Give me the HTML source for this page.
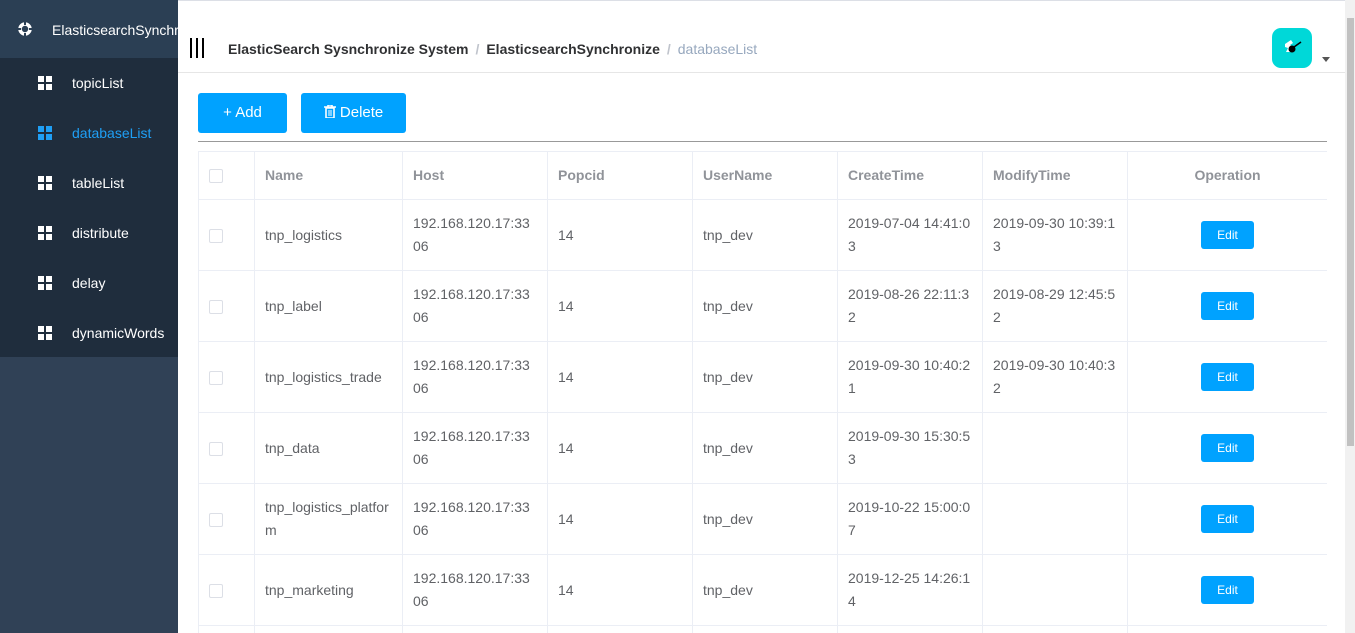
<!DOCTYPE html>
<html><head><meta charset="utf-8"><style>
*{box-sizing:border-box;margin:0;padding:0}
html,body{width:1355px;height:633px;overflow:hidden}
body{font-family:"Liberation Sans",Arial,sans-serif;background:#fff;position:relative}
.sb{position:absolute;left:0;top:0;width:178px;height:633px;background:#304156}
.logo{position:absolute;left:0;top:0;width:178px;height:58px;background:#2b3f54;color:#fff;font-size:14px;overflow:hidden;white-space:nowrap}
.logo .t{position:absolute;left:52px;top:22px}
.menu{position:absolute;top:58px;left:0;width:178px;height:299px;background:#1f2d3d}
.mi{height:50px;position:relative;color:#fff;font-size:14px}
.mi .ic{position:absolute;left:38px;top:18px;width:14px;height:14px}
.mi .ic i{position:absolute;width:6px;height:6px;background:currentColor}
.mi span{position:absolute;left:72px;top:17px}
.mi.act{color:#1f9ff5}
.top{position:absolute;left:178px;top:0;right:10px;height:73px;border-top:1px solid #dcdfe6;border-bottom:1px solid #e6e6e6}
.bc{position:absolute;left:50px;top:40px;font-size:14px;font-weight:bold;color:#303133;white-space:nowrap}
.bc .s{color:#c0c4cc;margin:0 7px;font-weight:bold}
.bc .l{color:#97a8be;font-weight:normal}
.ham{position:absolute;left:12px;top:37px}
.ham i{position:absolute;top:0;width:2px;height:20px;background:#000}
.av{position:absolute;left:1272px;top:28px;width:40px;height:40px;border-radius:9px;background:#00d8d8}
.car{position:absolute;left:1322px;top:57px;border:4px solid transparent;border-top:5px solid #555}
.btn{position:absolute;top:93px;height:40px;background:#00a2ff;color:#fff;font-size:15px;border-radius:3px;line-height:40px;text-align:center}
.line{position:absolute;left:198px;top:141px;width:1129px;height:1px;background:#999}
.tw{position:absolute;left:198px;top:151px;width:1129px;height:482px;overflow:hidden}
table{border-collapse:collapse;width:1129px;table-layout:fixed;font-size:14px;color:#606266}
td,th{border:1px solid #ebeef5;padding:0 10px;text-align:left;line-height:23px;vertical-align:middle;word-break:break-all}
th{height:48px;color:#909399;font-weight:bold}
td{height:71px}
.cb{display:inline-block;width:14px;height:14px;border:1px solid #dcdfe6;border-radius:2px;background:#fff;vertical-align:middle}
.e{display:inline-block;width:53px;height:28px;background:#00a2ff;color:#fff;font-size:12px;line-height:28px;text-align:center;border-radius:3px}
.sc{position:absolute;right:0;top:0;width:10px;height:633px;background:#f1f1f1}
.sc i{position:absolute;left:2px;top:18px;width:7px;height:428px;background:#c1c1c1}
</style></head><body>
<div class="sb">
<div class="logo"><svg style="position:absolute;left:18px;top:22px" width="14" height="14" viewBox="0 0 14 14"><circle cx="7" cy="7" r="5" fill="none" stroke="#fff" stroke-width="3.5"/><path d="M7 0v3M7 11v3M0 7h3M11 7h3" stroke="#2b3f54" stroke-width="2"/></svg><span class="t">ElasticsearchSynchronize</span></div>
<div class="menu">
<div class="mi"><div class="ic"><i style="left:0;top:0"></i><i style="left:8px;top:0"></i><i style="left:0;top:8px"></i><i style="left:8px;top:8px"></i></div><span>topicList</span></div>
<div class="mi act"><div class="ic"><i style="left:0;top:0"></i><i style="left:8px;top:0"></i><i style="left:0;top:8px"></i><i style="left:8px;top:8px"></i></div><span>databaseList</span></div>
<div class="mi"><div class="ic"><i style="left:0;top:0"></i><i style="left:8px;top:0"></i><i style="left:0;top:8px"></i><i style="left:8px;top:8px"></i></div><span>tableList</span></div>
<div class="mi"><div class="ic"><i style="left:0;top:0"></i><i style="left:8px;top:0"></i><i style="left:0;top:8px"></i><i style="left:8px;top:8px"></i></div><span>distribute</span></div>
<div class="mi"><div class="ic"><i style="left:0;top:0"></i><i style="left:8px;top:0"></i><i style="left:0;top:8px"></i><i style="left:8px;top:8px"></i></div><span>delay</span></div>
<div class="mi"><div class="ic"><i style="left:0;top:0"></i><i style="left:8px;top:0"></i><i style="left:0;top:8px"></i><i style="left:8px;top:8px"></i></div><span>dynamicWords</span></div>
</div></div>
<div class="top">
<div class="ham"><i style="left:0"></i><i style="left:6px"></i><i style="left:12px"></i></div>
<div class="bc">ElasticSearch Sysnchronize System<span class="s">/</span>ElasticsearchSynchronize<span class="s">/</span><span class="l">databaseList</span></div>
</div>
<div class="av"><svg width="40" height="40" viewBox="0 0 40 40"><path d="M13 16l6-4 2 3-3 2 3 2-2 5h-5l2-4-3-1z" fill="#fff"/><circle cx="20" cy="21" r="3.5" fill="#000"/><path d="M22 19l7-5" stroke="#000" stroke-width="1.5"/></svg></div>
<div class="car"></div>
<div class="btn" style="left:198px;width:89px">+ Add</div>
<div class="btn" style="left:301px;width:105px"><svg width="12" height="13" viewBox="0 0 12 13" style="vertical-align:-1px"><path d="M0 2h12M4 2V0h4v2M2 3h8v10H2z" fill="none" stroke="#fff" stroke-width="1.6"/><path d="M5 5v6M7 5v6" stroke="#fff"/></svg> Delete</div>
<div class="line"></div>
<div class="tw"><table>
<colgroup><col style="width:56px"><col style="width:148px"><col style="width:145px"><col style="width:145px"><col style="width:145px"><col style="width:145px"><col style="width:145px"><col style="width:200px"></colgroup>
<tr><th><span class="cb"></span></th><th>Name</th><th>Host</th><th>Popcid</th><th>UserName</th><th>CreateTime</th><th>ModifyTime</th><th style="text-align:center">Operation</th></tr>
<tr><td><span class="cb"></span></td><td>tnp_logistics</td><td>192.168.120.17:3306</td><td>14</td><td>tnp_dev</td><td>2019-07-04 14:41:03</td><td>2019-09-30 10:39:13</td><td style="text-align:center"><span class="e">Edit</span></td></tr>
<tr><td><span class="cb"></span></td><td>tnp_label</td><td>192.168.120.17:3306</td><td>14</td><td>tnp_dev</td><td>2019-08-26 22:11:32</td><td>2019-08-29 12:45:52</td><td style="text-align:center"><span class="e">Edit</span></td></tr>
<tr><td><span class="cb"></span></td><td>tnp_logistics_trade</td><td>192.168.120.17:3306</td><td>14</td><td>tnp_dev</td><td>2019-09-30 10:40:21</td><td>2019-09-30 10:40:32</td><td style="text-align:center"><span class="e">Edit</span></td></tr>
<tr><td><span class="cb"></span></td><td>tnp_data</td><td>192.168.120.17:3306</td><td>14</td><td>tnp_dev</td><td>2019-09-30 15:30:53</td><td></td><td style="text-align:center"><span class="e">Edit</span></td></tr>
<tr><td><span class="cb"></span></td><td>tnp_logistics_platform</td><td>192.168.120.17:3306</td><td>14</td><td>tnp_dev</td><td>2019-10-22 15:00:07</td><td></td><td style="text-align:center"><span class="e">Edit</span></td></tr>
<tr><td><span class="cb"></span></td><td>tnp_marketing</td><td>192.168.120.17:3306</td><td>14</td><td>tnp_dev</td><td>2019-12-25 14:26:14</td><td></td><td style="text-align:center"><span class="e">Edit</span></td></tr>
<tr><td><span class="cb"></span></td><td></td><td></td><td></td><td></td><td></td><td></td><td></td></tr>
</table></div>
<div class="sc"><i></i></div>
</body></html>
